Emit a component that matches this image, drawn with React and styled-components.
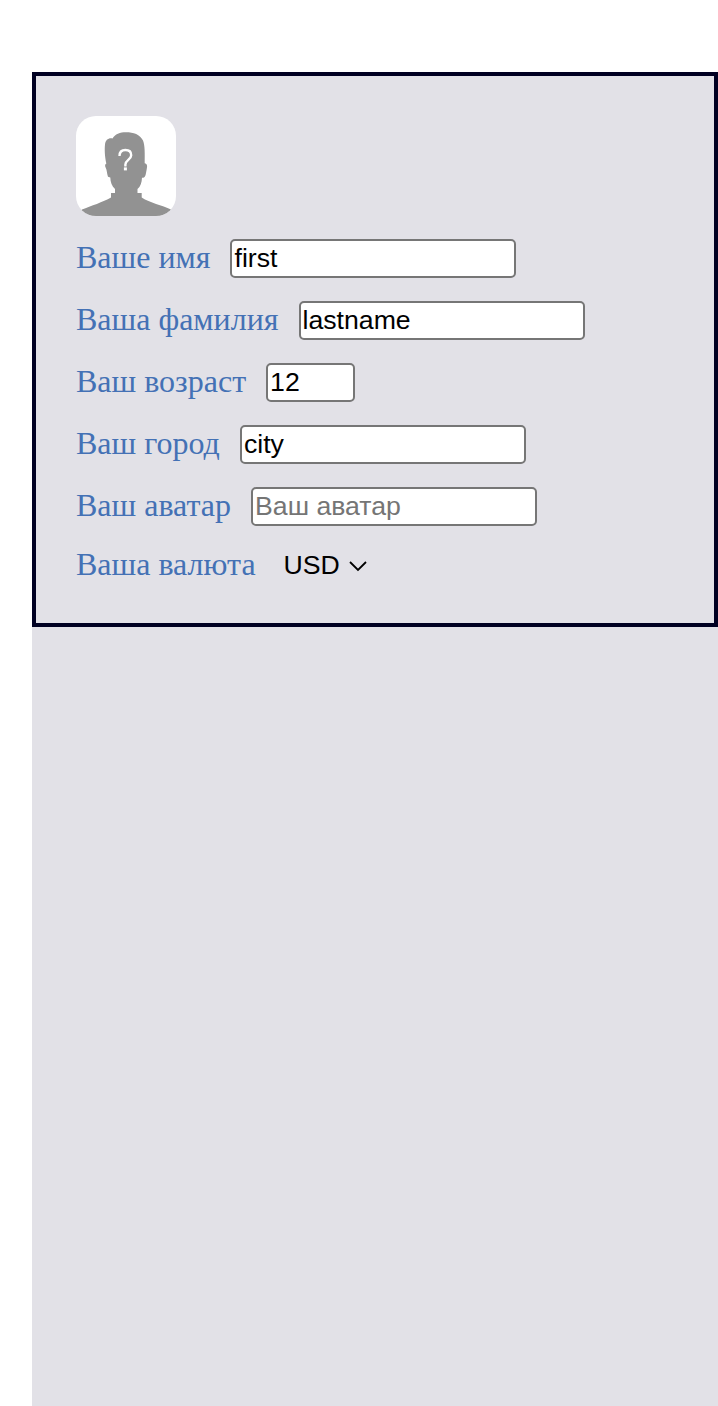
import React from "react";
import styled, { createGlobalStyle } from "styled-components";

const GlobalStyle = createGlobalStyle`
  * { box-sizing: border-box; }
  body { margin: 0; background: #fff; }
`;

const Page = styled.main`
  min-height: 1406px;
  padding: 72px 0 0 32px;
  display: flex;
`;

const Content = styled.div`
  flex: 1;
  background: #e2e1e7;
`;

const Profile = styled.section`
  height: 555px;
  padding: 40px;
  border: 4px solid #000022;
`;

const Avatar = styled.svg`
  display: block;
  width: 100px;
  height: 100px;
  border-radius: 20px;
  background: #fff;
`;

const Form = styled.form`
  display: flex;
  flex-direction: column;
  gap: 23px;
  margin-top: 23px;
`;

const Field = styled.label`
  display: flex;
  align-items: flex-start;
  gap: 20px;
  height: ${(p) => (p.$short ? "36px" : "39px")};
  margin-top: ${(p) => (p.$short ? "-3px" : "0")};
`;

const Caption = styled.span`
  color: #4471b5;
  font: 32px/37px "Liberation Serif", serif;
  white-space: nowrap;
`;

const Input = styled.input`
  width: ${(p) => p.$width || 286}px;
  height: 39px;
  padding: 0 2px;
  border: 2px solid #767676;
  border-radius: 5px;
  background: #fff;
  color: #000;
  font: 26.67px "Liberation Sans", sans-serif;
  outline: none;
  &::placeholder { color: #757575; opacity: 1; }
`;

const Currency = styled.div`
  display: flex;
  align-items: center;
  gap: 9px;
  height: 39px;
  padding-left: 8px;
  color: #000;
  font: 26.67px "Liberation Sans", sans-serif;
`;

const Chevron = styled.svg`
  width: 18px;
  height: 12px;
  margin-top: 1px;
`;

const FIELDS = [
  { caption: "Ваше имя", value: "first" },
  { caption: "Ваша фамилия", value: "lastname" },
  { caption: "Ваш возраст", value: "12", width: 89 },
  { caption: "Ваш город", value: "city" },
  { caption: "Ваш аватар", value: "", placeholder: "Ваш аватар" },
];

export default function App() {
  return (
    <>
      <GlobalStyle />
      <Page>
        <Content>
          <Profile>
            <Avatar viewBox="0 0 100 100">
              <path
                fill="#929292"
                d="M30.300 47.500C28.700 40 28.500 33 29 28.500C29.600 23.800 32.500 21.600 36.500 22.400C39 18 44 16.200 50 16.200C57.500 16.200 64 18.300 67 24.500C69 29 68.800 38 68.700 47.200C70.800 47.500 71.500 49.500 70.900 52C70.300 55.500 70 58 69.200 60C68.700 61.300 67.500 61.800 66 61.800C65.800 67 64.500 70.500 61.500 73V77H65.700V81.500C74 87 86 89 95 93.500L100 100H0L6 93.500C15 90 27 86 35 81.500V77H39V73C36 70.500 34.300 66 34.300 61.500L32 60.700C30.800 57.500 31 54 29.600 51.500C28.800 49.800 29 48.200 30.300 47.500Z"
              />
              <path d="M43.500 40C43.500 36 45.800 34 49.400 34C53 34 55.200 36 55.200 39.200C55.200 43.600 49.400 44.200 49.400 48.500V50.500" fill="none" stroke="#fff" strokeWidth="2.400" />
              <rect x="47.900" y="51.400" width="3" height="3" fill="#fff" />
            </Avatar>
            <Form>
              {FIELDS.map((f) => (
                <Field key={f.caption}>
                  <Caption>{f.caption}</Caption>
                  <Input type="text" defaultValue={f.value} placeholder={f.placeholder} $width={f.width} />
                </Field>
              ))}
              <Field as="div" $short>
                <Caption>Ваша валюта</Caption>
                <Currency>
                  USD
                  <Chevron viewBox="0 0 18 12">
                    <path d="M1 2L9 10L17 2" fill="none" stroke="#000" strokeWidth="1.800" />
                  </Chevron>
                </Currency>
              </Field>
            </Form>
          </Profile>
        </Content>
      </Page>
    </>
  );
}
